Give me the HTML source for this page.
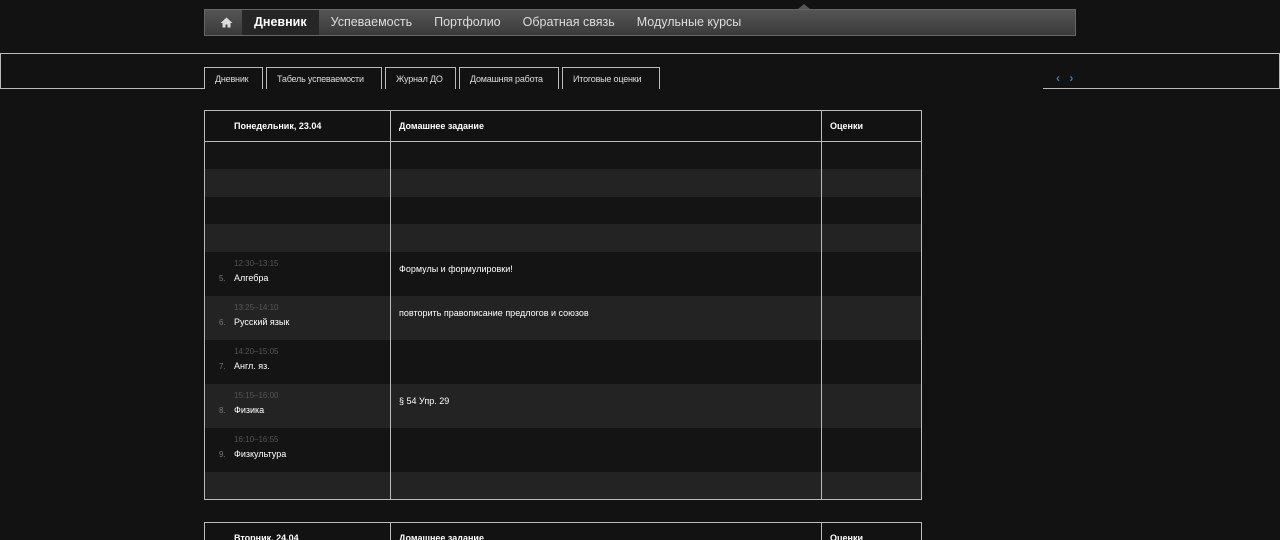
<!DOCTYPE html>
<html style="height:540px;overflow:hidden"><head><meta charset="utf-8"><style>
*{margin:0;padding:0;box-sizing:border-box}
body{width:1280px;height:540px;background:#121212;font-family:"Liberation Sans",Arial,sans-serif;position:relative;overflow:hidden;color:#fff}
.nav{position:absolute;left:204px;top:9px;width:872px;height:27px;background:linear-gradient(#555,#3a3a3a);border:1px solid #666;display:flex;align-items:center;font-size:12.5px;color:#ddd}
.nav span{padding:0 13px;line-height:25px}
.nav .act{background:#262626;color:#fff;font-weight:bold}
.tri{position:absolute;left:798px;top:4px;width:0;height:0;border-left:6px solid transparent;border-right:6px solid transparent;border-bottom:5px solid #555}
.l{position:absolute;background:#bbb}
.tabs{position:absolute;left:204px;top:67px;display:flex;font-size:9px}
.tabs div{height:22px;border:1px solid #bbb;border-bottom:none;padding:0 10px;line-height:22px;margin-right:3px;color:#ddd;letter-spacing:-0.2px}
.arr{position:absolute;left:1056px;top:71px;color:#3a7ab5;font-size:12px;font-weight:bold;letter-spacing:3px}
table{position:absolute;left:204px;border-collapse:collapse;font-size:9px;width:718px}
td,th{border-left:1px solid #bbb;border-right:1px solid #bbb;text-align:left;vertical-align:top}
th{height:31px;font-weight:bold;padding:10px 0 0 8px;border-top:1px solid #bbb;border-bottom:1px solid #bbb}
th:first-child{padding-left:29px}
tr.e td{height:27.5px}
tr.s td{height:44px}
tr.d{background:#141414}tr.g{background:#232323}
.t{color:#555;font-size:8px;padding:7px 0 0 29px}
.n{color:#777;margin-left:-29px;display:inline-block;width:29px;padding-left:14px;font-size:8px}
.s td.h{padding:12px 0 0 8px}
</style></head><body>
<div class="tri"></div>
<div class="nav"><span style="padding:0 9px 0 15px;display:flex;align-items:center;height:25px"><svg width="13" height="11" viewBox="0 0 13 11"><path d="M6.5 0.5L0.5 6h2v4.5h3V7.5h2v3h3V6h2z" fill="#ddd"/></svg></span><span class="act" style="padding:0 12px">Дневник</span><span style="padding:0 11px 0 12px">Успеваемость</span><span style="padding:0 11px">Портфолио</span><span style="padding:0 11px">Обратная связь</span><span style="padding:0 11px">Модульные курсы</span></div>
<div class="l" style="left:0;top:53px;width:1280px;height:1px"></div>
<div class="l" style="left:0;top:53px;width:1px;height:36px"></div>
<div class="l" style="left:1279px;top:53px;width:1px;height:36px"></div>
<div class="l" style="left:0;top:88px;width:204px;height:1px"></div>
<div class="l" style="left:1043px;top:88px;width:237px;height:1px"></div>
<div class="tabs"><div style="width:59px;padding:0 0 0 10px">Дневник</div><div style="width:116px">Табель успеваемости</div><div style="width:71px">Журнал ДО</div><div style="width:100px">Домашняя работа</div><div style="width:98px;margin-right:0">Итоговые оценки</div></div>
<div class="arr">‹ ›</div>
<table style="top:110px;border-bottom:1px solid #bbb">
<tr><th style="width:186px">Понедельник, 23.04</th><th style="width:431px">Домашнее задание</th><th>Оценки</th></tr>
<tr class="e d"><td></td><td></td><td></td></tr>
<tr class="e g"><td></td><td></td><td></td></tr>
<tr class="e d"><td></td><td></td><td></td></tr>
<tr class="e g"><td></td><td></td><td></td></tr>
<tr class="s d"><td class="t">12:30–13:15<br><span class="n">5.</span><span style="color:#fff;font-size:9px;line-height:20px">Алгебра</span></td><td class="h">Формулы и формулировки!</td><td></td></tr>
<tr class="s g"><td class="t">13:25–14:10<br><span class="n">6.</span><span style="color:#fff;font-size:9px;line-height:20px">Русский язык</span></td><td class="h">повторить правописание предлогов и союзов</td><td></td></tr>
<tr class="s d"><td class="t">14:20–15:05<br><span class="n">7.</span><span style="color:#fff;font-size:9px;line-height:20px">Англ. яз.</span></td><td class="h"></td><td></td></tr>
<tr class="s g"><td class="t">15:15–16:00<br><span class="n">8.</span><span style="color:#fff;font-size:9px;line-height:20px">Физика</span></td><td class="h">§ 54 Упр. 29</td><td></td></tr>
<tr class="s d"><td class="t">16:10–16:55<br><span class="n">9.</span><span style="color:#fff;font-size:9px;line-height:20px">Физкультура</span></td><td class="h"></td><td></td></tr>
<tr class="e g"><td></td><td></td><td></td></tr>
</table>
<table style="top:522px">
<tr><th style="width:186px">Вторник, 24.04</th><th style="width:431px">Домашнее задание</th><th>Оценки</th></tr>
</table>
</body></html>
